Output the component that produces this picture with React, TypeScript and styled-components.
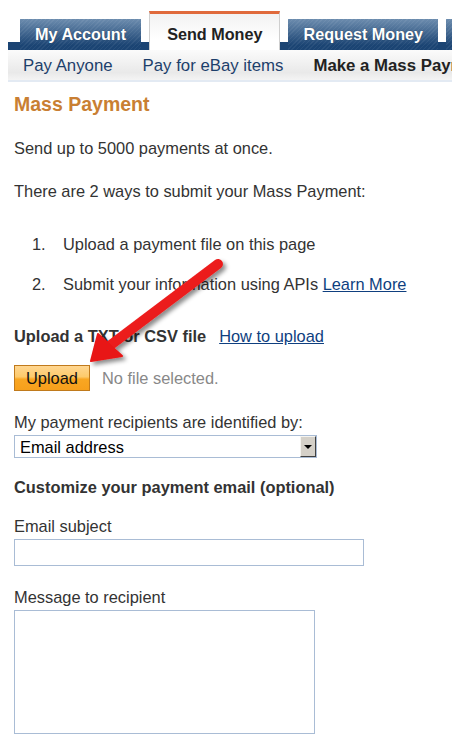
import React from 'react';
import styled, { createGlobalStyle } from 'styled-components';

const GlobalStyle = createGlobalStyle`
  html, body {
    margin: 0;
    padding: 0;
    background: #fff;
  }
  body {
    font-family: 'Liberation Sans', Arial, sans-serif;
    color: #333;
    overflow: hidden;
  }
`;

const Page = styled.div`
  position: relative;
  width: 452px;
  height: 746px;
  overflow: hidden;
`;

const TabBar = styled.div`
  display: flex;
  align-items: flex-end;
  gap: 8px;
  height: 50px;
  margin-left: 8px;
  padding-left: 12px;
  background: linear-gradient(to bottom, transparent 42px, #1b4473 42px);
  overflow: hidden;
  white-space: nowrap;
`;

const Tab = styled.div<{ $active?: boolean; $width?: number }>`
  flex: none;
  box-sizing: border-box;
  display: flex;
  align-items: flex-start;
  justify-content: center;
  width: ${(p) => (p.$width ? `${p.$width}px` : 'auto')};
  font-size: 16.2px;
  font-weight: bold;
  padding: ${(p) => (p.$active ? '11px 17px 0' : '6px 15px 0')};
  height: ${(p) => (p.$active ? '39px' : '31px')};
  color: ${(p) => (p.$active ? '#222' : '#fff')};
  background: ${(p) =>
    p.$active
      ? 'linear-gradient(to bottom, #f2f2f2, #ffffff 70%)'
      : `repeating-linear-gradient(135deg, rgba(255,255,255,0.06) 0 1px, transparent 1px 3px),
         linear-gradient(to bottom, #6c8cae, #1b4473 85%)`};
  border: ${(p) => (p.$active ? '1px solid #cfcfcf' : 'none')};
  border-top: ${(p) => (p.$active ? '3px solid #e06a3c' : 'none')};
  border-bottom: none;
  text-shadow: ${(p) => (p.$active ? 'none' : '0 0 1px rgba(0,0,0,0.4)')};
`;

const SubNav = styled.div`
  display: flex;
  align-items: center;
  height: 30px;
  margin-left: 8px;
  background: linear-gradient(to bottom, #fbfbfb, #e9e9e9 75%, #f4f4f4);
  border-bottom: 2px solid #e3eaf3;
  white-space: nowrap;
  overflow: hidden;
`;

const SubItem = styled.span<{ $current?: boolean }>`
  flex: none;
  padding: 2px 15px 0;
  font-size: 16.8px;
  font-weight: ${(p) => (p.$current ? 'bold' : 'normal')};
  color: ${(p) => (p.$current ? '#222' : '#1d3f6b')};
`;

const Content = styled.div`
  padding: 10px 14px 0;
  font-size: 16.4px;
  line-height: 20px;
`;

const Heading = styled.h1`
  margin: 0 0 22px;
  font-size: 19.5px;
  line-height: 24px;
  font-weight: bold;
  color: #c97f33;
`;

const Para = styled.p`
  margin: 0 0 23px;
`;

const Steps = styled.ol`
  margin: 33px 0 0;
  padding: 0;
  list-style: none;
`;

const Step = styled.li`
  display: flex;
  margin-bottom: 20px;
`;

const StepNum = styled.span`
  width: 49px;
  padding-left: 18px;
  box-sizing: border-box;
  flex: none;
`;

const Link = styled.a`
  color: #0f3f7f;
  text-decoration: underline;
`;

const UploadRow = styled.div`
  display: flex;
  align-items: baseline;
  gap: 13px;
  margin-top: 32px;
`;

const Bold = styled.span`
  font-weight: bold;
`;

const FileRow = styled.div`
  display: flex;
  align-items: center;
  gap: 12px;
  margin-top: 19px;
`;

const UploadButton = styled.button`
  box-sizing: border-box;
  width: 76px;
  height: 26px;
  padding: 0;
  font-family: inherit;
  font-size: 16.4px;
  color: #111;
  border: 1px solid #c07a1c;
  background: linear-gradient(to bottom, #ffd690 0%, #fdca6c 45%, #f9a622 55%, #f7a01c 100%);
  cursor: pointer;
`;

const Muted = styled.span`
  color: #888;
`;

const FieldLabel = styled.div<{ $gap?: number }>`
  margin-top: ${(p) => p.$gap ?? 0}px;
  margin-bottom: 3px;
`;

const SelectBox = styled.div`
  box-sizing: border-box;
  display: flex;
  align-items: center;
  width: 303px;
  height: 23px;
  border: 1px solid #a9bcd5;
  color: #000;
`;

const SelectText = styled.span`
  flex: 1;
  padding-left: 5px;
`;

const SelectArrow = styled.span`
  box-sizing: border-box;
  width: 16px;
  height: 21px;
  display: flex;
  align-items: center;
  justify-content: center;
  background: #d4d0c8;
  border: 1px solid;
  border-color: #f4f3ef #404040 #404040 #f4f3ef;
  &::after {
    content: '';
    border-left: 4px solid transparent;
    border-right: 4px solid transparent;
    border-top: 4px solid #000;
    margin-top: 1px;
  }
`;

const SectionTitle = styled.div`
  font-weight: bold;
  margin-top: 19px;
`;

const TextInput = styled.input`
  box-sizing: border-box;
  display: block;
  width: 350px;
  height: 27px;
  border: 1px solid #a9bcd5;
  padding: 0 4px;
  font-family: inherit;
  font-size: 16px;
`;

const TextArea = styled.textarea`
  box-sizing: border-box;
  display: block;
  width: 301px;
  height: 124px;
  border: 1px solid #a9bcd5;
  resize: none;
  font-family: inherit;
  font-size: 16px;
`;

const ArrowOverlay = styled.svg`
  position: absolute;
  left: 0;
  top: 0;
  pointer-events: none;
`;

function RedArrow() {
  return (
    <ArrowOverlay width="452" height="746" viewBox="0 0 452 746">
      <defs>
        <filter id="shadow" x="-20%" y="-20%" width="140%" height="140%">
          <feDropShadow dx="3" dy="3" stdDeviation="2" floodColor="#000" floodOpacity="0.45" />
        </filter>
        <linearGradient id="red" x1="0" y1="0" x2="1" y2="1">
          <stop offset="0" stopColor="#ff3030" />
          <stop offset="1" stopColor="#d80c0c" />
        </linearGradient>
      </defs>
      <g filter="url(#shadow)">
        <line x1="218" y1="264" x2="108" y2="347" stroke="url(#red)" strokeWidth="10" strokeLinecap="round" />
        <polygon points="91,361 98,334 122,356" fill="#e81515" stroke="#e81515" strokeWidth="2" strokeLinejoin="round" />
      </g>
    </ArrowOverlay>
  );
}

export default function App() {
  return (
    <Page>
      <GlobalStyle />
      <TabBar>
        <Tab>My Account</Tab>
        <Tab $active>Send Money</Tab>
        <Tab>Request Money</Tab>
        <Tab $width={40} aria-label="Merchant Services" />
      </TabBar>
      <SubNav>
        <SubItem>Pay Anyone</SubItem>
        <SubItem>Pay for eBay items</SubItem>
        <SubItem $current>Make a Mass Payment</SubItem>
      </SubNav>
      <Content>
        <Heading>Mass Payment</Heading>
        <Para>Send up to 5000 payments at once.</Para>
        <Para>There are 2 ways to submit your Mass Payment:</Para>
        <Steps>
          <Step>
            <StepNum>1.</StepNum>
            <span>Upload a payment file on this page</span>
          </Step>
          <Step>
            <StepNum>2.</StepNum>
            <span>
              Submit your information using APIs <Link href="#">Learn More</Link>
            </span>
          </Step>
        </Steps>
        <UploadRow>
          <Bold>Upload a TXT or CSV file</Bold>
          <Link href="#">How to upload</Link>
        </UploadRow>
        <FileRow>
          <UploadButton>Upload</UploadButton>
          <Muted>No file selected.</Muted>
        </FileRow>
        <FieldLabel $gap={21}>My payment recipients are identified by:</FieldLabel>
        <SelectBox>
          <SelectText>Email address</SelectText>
          <SelectArrow />
        </SelectBox>
        <SectionTitle>Customize your payment email (optional)</SectionTitle>
        <FieldLabel $gap={19}>Email subject</FieldLabel>
        <TextInput type="text" />
        <FieldLabel $gap={21}>Message to recipient</FieldLabel>
        <TextArea />
      </Content>
      <RedArrow />
    </Page>
  );
}
